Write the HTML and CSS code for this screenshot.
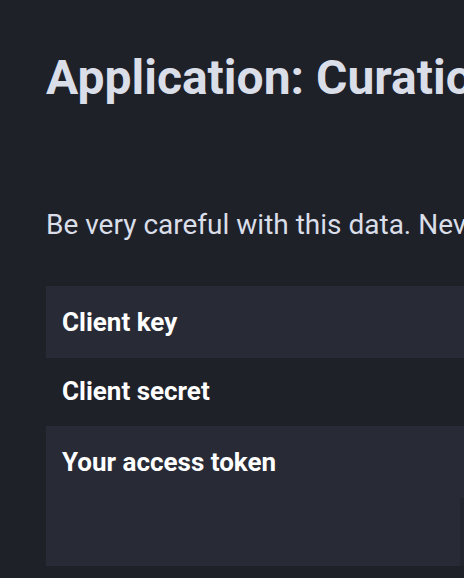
FILE: index.html
```html
<!DOCTYPE html>
<html lang="en">
<head>
<meta charset="utf-8">
<title>Application: Curation</title>
<link rel="stylesheet" href="styles.css">
</head>
<body>
<main class="page">
  <h1 class="title">Application: Curation Bot</h1>
  <p class="warning">Be very careful with this data. Never share it with anyone!</p>
  <table class="secrets">
    <tbody>
      <tr class="row row-key">
        <th class="label">Client key</th>
        <td class="value"><code class="code"></code></td>
      </tr>
      <tr class="row row-secret">
        <th class="label">Client secret</th>
        <td class="value"><code class="code"></code></td>
      </tr>
      <tr class="row row-token">
        <th class="label">Your access token</th>
        <td class="value"><div class="token-box"></div></td>
      </tr>
    </tbody>
  </table>
</main>
</body>
</html>
```

FILE: styles.css
```css
html, body {
  margin: 0;
  padding: 0;
  background: #1f2129;
  overflow: hidden;
}

body {
  font-family: Roboto, "Liberation Sans", sans-serif;
  color: #d9dee8;
}

.page {
  padding: 50px 0 0 46px;
  width: 1400px;
}

.title {
  margin: 0;
  font-size: 48px;
  line-height: 56px;
  font-weight: 700;
  color: #d9dee8;
  white-space: nowrap;
}

.warning {
  margin: 99px 0 0;
  font-size: 28px;
  line-height: 40px;
  font-weight: 400;
  color: #d9dee8;
  white-space: nowrap;
}

.secrets {
  margin-top: 41px;
  border-collapse: collapse;
  width: 1300px;
}

.row-key,
.row-token {
  background: #282b36;
}

.label {
  width: 382px;
  padding: 16px 16px 16px;
  text-align: left;
  vertical-align: top;
  font-size: 26px;
  line-height: 40px;
  font-weight: 700;
  color: #ffffff;
  white-space: nowrap;
}

.row-secret .label {
  padding: 13px 16px 15px;
}

.row-token .label {
  padding-bottom: 84px;
}

.value {
  padding: 0;
  vertical-align: top;
}

.token-box {
  margin-top: 72px;
  height: 68px;
  background: #22252e;
}
```
